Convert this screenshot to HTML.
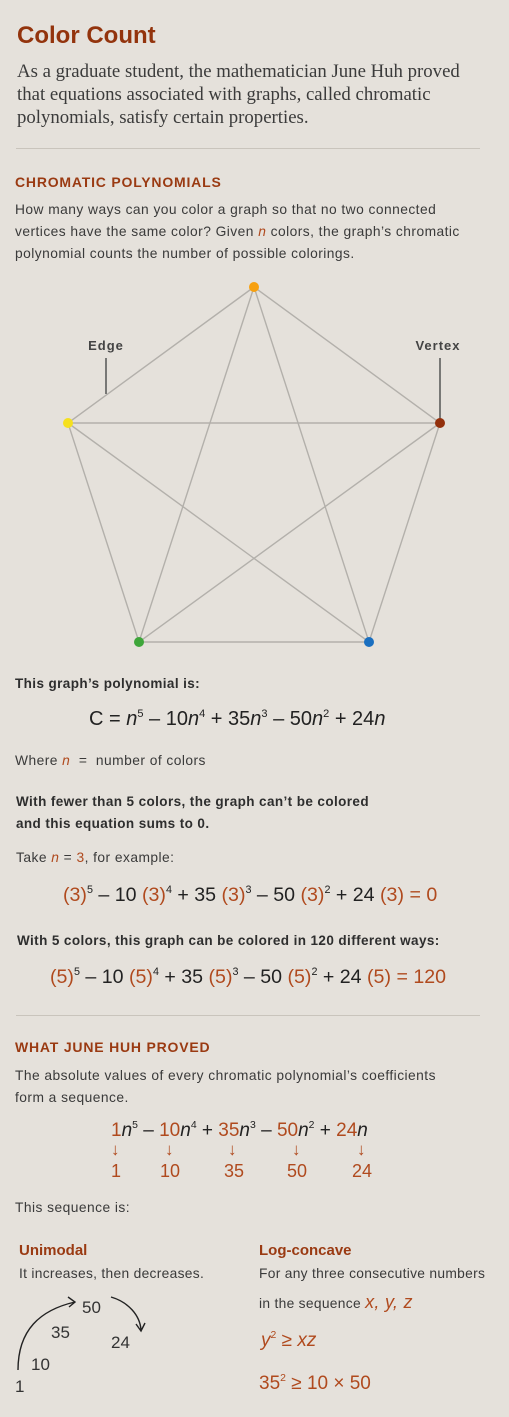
<!DOCTYPE html>
<html><head><meta charset="utf-8"><style>
*{margin:0;padding:0;box-sizing:border-box}
body{width:509px;height:1417px;background:#e5e1db;position:relative;overflow:hidden;font-family:"Liberation Sans",sans-serif;color:#333}
.a{position:absolute;white-space:nowrap}
.t{font-size:13.8px;color:#3a3a3a;letter-spacing:.45px}
.b{font-size:13.5px;font-weight:bold;color:#2e2e2e;letter-spacing:.4px}
.h{font-size:14px;font-weight:bold;color:#9a3a12;letter-spacing:.8px}
.o{color:#b04a1e}
.f{font-size:20px;color:#222}
i{font-style:italic}
sup{font-size:.55em;vertical-align:.75em;line-height:0}
.hr{position:absolute;left:16px;width:464px;height:1px;background:#c9c4bc}
</style></head><body>
<div class="a" style="left:17px;top:22px;font-size:24px;font-weight:bold;color:#93340d">Color Count</div>
<div class="a" style="left:17px;top:60px;font-family:'Liberation Serif',serif;font-size:18.8px;line-height:23px;color:#3b3b3b">As a graduate student, the mathematician June Huh proved<br>that equations associated with graphs, called chromatic<br>polynomials, satisfy certain properties.</div>
<div class="hr" style="top:148px"></div>
<div class="a h" style="top:174px;left:15px">CHROMATIC POLYNOMIALS</div>
<div class="a t" style="left:15px;top:199px;line-height:22px">How many ways can you color a graph so that no two connected<br>vertices have the same color? Given <i class="o">n</i> colors, the graph’s chromatic<br>polynomial counts the number of possible colorings.</div>
<svg class="a" style="left:0;top:270px" width="509" height="390" viewBox="0 270 509 390">
<g stroke="#b3b0ab" stroke-width="1.4" fill="none">
<path d="M254 287L68 423L139 642L369 642L440 423Z"/>
<path d="M254 287L139 642M254 287L369 642M68 423L440 423M68 423L369 642M440 423L139 642"/>
</g>
<path d="M106 358V394M440 358V420" stroke="#555" stroke-width="1.5"/>
<circle cx="254" cy="287" r="5" fill="#f7a00f"/>
<circle cx="68" cy="423" r="5" fill="#f5e01e"/>
<circle cx="440" cy="423" r="5" fill="#93300c"/>
<circle cx="139" cy="642" r="5" fill="#3ea63a"/>
<circle cx="369" cy="642" r="5" fill="#1a6fc0"/>
<text x="106" y="350" text-anchor="middle" font-family="Liberation Sans" font-size="13" font-weight="bold" fill="#444" letter-spacing="1">Edge</text>
<text x="438" y="350" text-anchor="middle" font-family="Liberation Sans" font-size="13" font-weight="bold" fill="#444" letter-spacing="1">Vertex</text>
</svg>
<div class="a b" style="left:15px;top:676px">This graph’s polynomial is:</div>
<div class="a f o" style="left:89px;top:708px">C = <i>n</i><sup>5</sup> – 10<i>n</i><sup>4</sup> + 35<i>n</i><sup>3</sup> – 50<i>n</i><sup>2</sup> + 24<i>n</i></div>
<div class="a t" style="left:15px;top:753px">Where <i class="o">n</i> &nbsp;= &nbsp;number of colors</div>
<div class="a b" style="left:16px;top:791px;line-height:22px">With fewer than 5 colors, the graph can’t be colored<br>and this equation sums to 0.</div>
<div class="a t" style="left:16px;top:850px">Take <i class="o">n</i> = <span class="o">3</span>, for example:</div>
<div class="a f" style="left:63px;top:884px;font-size:19.6px"><span class="o">(3)</span><sup>5</sup> – 10 <span class="o">(3)</span><sup>4</sup> + 35 <span class="o">(3)</span><sup>3</sup> – 50 <span class="o">(3)</span><sup>2</sup> + 24 <span class="o">(3)</span> <span class="o">= 0</span></div>
<div class="a b" style="left:17px;top:933px">With 5 colors, this graph can be colored in 120 different ways:</div>
<div class="a f" style="left:50px;top:966px;font-size:19.6px"><span class="o">(5)</span><sup>5</sup> – 10 <span class="o">(5)</span><sup>4</sup> + 35 <span class="o">(5)</span><sup>3</sup> – 50 <span class="o">(5)</span><sup>2</sup> + 24 <span class="o">(5)</span> <span class="o">= 120</span></div>
<div class="hr" style="top:1015px"></div>
<div class="a h" style="top:1039px;left:15px">WHAT JUNE HUH PROVED</div>
<div class="a t" style="left:15px;top:1065px;line-height:22px">The absolute values of every chromatic polynomial’s coefficients<br>form a sequence.</div>
<div class="a f" style="left:111px;top:1120px;font-size:19px"><span class="o">1</span><i>n</i><sup>5</sup> – <span class="o">10</span><i>n</i><sup>4</sup> + <span class="o">35</span><i>n</i><sup>3</sup> – <span class="o">50</span><i>n</i><sup>2</sup> + <span class="o">24</span><i>n</i></div>
<div class="a o" style="left:111px;top:1140px;font-size:17px">↓</div><div class="a o" style="left:165px;top:1140px;font-size:17px">↓</div><div class="a o" style="left:228px;top:1140px;font-size:17px">↓</div><div class="a o" style="left:292px;top:1140px;font-size:17px">↓</div><div class="a o" style="left:357px;top:1140px;font-size:17px">↓</div>
<div class="a o" style="left:111px;top:1161px;font-size:18px">1</div><div class="a o" style="left:160px;top:1161px;font-size:18px">10</div><div class="a o" style="left:224px;top:1161px;font-size:18px">35</div><div class="a o" style="left:287px;top:1161px;font-size:18px">50</div><div class="a o" style="left:352px;top:1161px;font-size:18px">24</div>
<div class="a t" style="left:15px;top:1200px">This sequence is:</div>
<div class="a" style="left:19px;top:1242px;font-size:15px;font-weight:bold;color:#9a3a12">Unimodal</div>
<div class="a t" style="left:19px;top:1266px;letter-spacing:.3px">It increases, then decreases.</div>
<div class="a" style="left:259px;top:1242px;font-size:15px;font-weight:bold;color:#9a3a12">Log-concave</div>
<div class="a t" style="left:259px;top:1266px;letter-spacing:.3px">For any three consecutive numbers</div>
<div class="a t" style="left:259px;top:1292px;letter-spacing:.3px">in the sequence <i class="o" style="font-size:18px">x, y, z</i></div>
<div class="a o" style="left:261px;top:1330px;font-size:19px"><i>y</i><sup>2</sup> ≥ <i>xz</i></div>
<div class="a o" style="left:259px;top:1373px;font-size:19px">35<sup>2</sup> ≥ 10 × 50</div>
<svg class="a" style="left:0;top:1280px" width="170" height="120">
<g stroke="#222" stroke-width="1.4" fill="none">
<path d="M18 90C18 50 40 30 75 22"/><path d="M68 17L75 22L69 27"/>
<path d="M111 17C128 22 140 35 141 50"/><path d="M136 44L141 51L145 43"/>
</g>
</svg>
<div class="a" style="left:82px;top:1298px;font-size:17px;color:#333">50</div>
<div class="a" style="left:51px;top:1323px;font-size:17px;color:#333">35</div>
<div class="a" style="left:111px;top:1333px;font-size:17px;color:#333">24</div>
<div class="a" style="left:31px;top:1355px;font-size:17px;color:#333">10</div>
<div class="a" style="left:15px;top:1377px;font-size:17px;color:#333">1</div>
</body></html>
